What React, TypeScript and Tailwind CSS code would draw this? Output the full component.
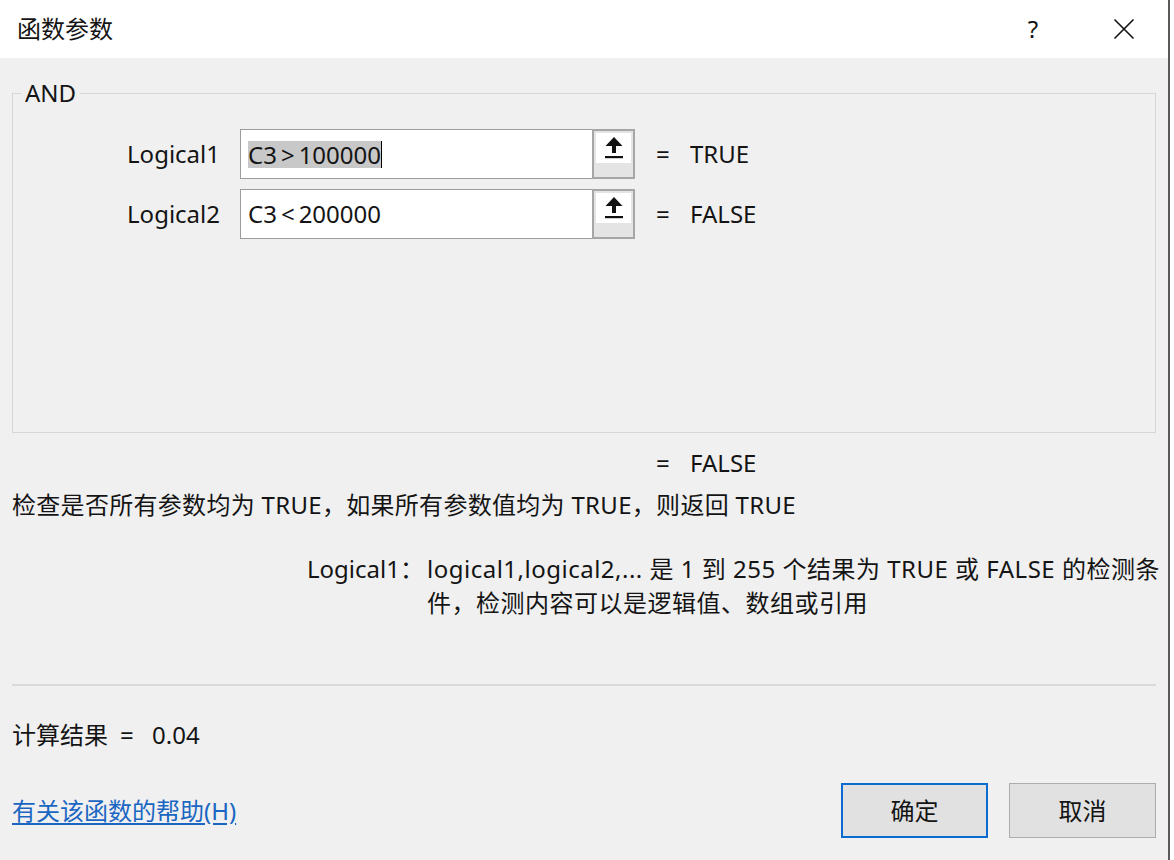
import React from 'react';

const font = { fontFamily: '"Noto Sans", "Noto Sans CJK SC", sans-serif' };

function UploadIcon() {
  return (
    <svg width="20" height="24" viewBox="0 0 20 24" fill="#111">
      <path d="M10 1 L18.5 10 L12 10 L12 17 L8 17 L8 10 L1.5 10 Z" />
      <rect x="1" y="20" width="18" height="2.2" />
    </svg>
  );
}

function CloseIcon() {
  return (
    <svg width="22" height="22" viewBox="0 0 22 22" stroke="#111" strokeWidth="1.6" fill="none">
      <path d="M1.5 1.5 L20.5 20.5 M20.5 1.5 L1.5 20.5" />
    </svg>
  );
}

// operator gets a little room either side, the way the dialog font draws it
function Formula({ left, op, right }: { left: string; op: string; right: string }) {
  return (
    <>
      {left}
      <span className="mx-[4px]">{op}</span>
      {right}
    </>
  );
}

function ArgRow({ label, left, op, right, result, selected }: { label: string; left: string; op: string; right: string; result: string; selected?: boolean }) {
  return (
    <div className="flex items-center h-[50px]">
      <div className="w-[207px] text-right">{label}</div>
      <div className="ml-[20px] w-[353px] h-[50px] bg-white border border-[#9c9c9c] flex items-center pl-[7px]">
        {selected ? (
          <>
            <span className="bg-[#c8c8c8] leading-[27px]"><Formula left={left} op={op} right={right} /></span>
            <span className="w-px h-[27px] bg-black" />
          </>
        ) : (
          <span><Formula left={left} op={op} right={right} /></span>
        )}
      </div>
      <div className="-ml-px w-[43px] h-[50px] border-2 border-[#a6a6a6] bg-[#e4e4e4] p-[2px] flex flex-col">
        <div className="h-[30px] bg-white flex items-center justify-center">
          <UploadIcon />
        </div>
      </div>
      <div className="ml-[21px] w-[34px]">=</div>
      <div>{result}</div>
    </div>
  );
}

export default function App() {
  return (
    <div className="w-[1174px] h-[860px] flex bg-white overflow-hidden text-[24px] text-[#141414]" style={font}>
      <div className="w-[1168px] flex flex-col">
        <div className="h-[58px] bg-white flex items-center pl-[17px]">
          <span className="flex-1">函数参数</span>
          <span className="w-[20px] text-center">?</span>
          <span className="ml-[70px] mr-[33px] flex items-center"><CloseIcon /></span>
        </div>

        <div className="flex-1 bg-[#f0f0f0] px-[12px] flex flex-col">
          <fieldset className="mt-[21px] h-[354px] border border-[#d6d6d6] w-[1144px]">
            <legend className="ml-[8px] px-[4px] leading-[28px]">AND</legend>
            <div className="pt-[22px] flex flex-col gap-[10px]">
              <ArgRow label="Logical1" left="C3" op=">" right="100000" result="TRUE" selected />
              <ArgRow label="Logical2" left="C3" op="<" right="200000" result="FALSE" />
            </div>
          </fieldset>

          <div className="mt-[16px] h-[28px] leading-[28px] flex pl-[644px]">
            <span className="w-[34px]">=</span>
            <span>FALSE</span>
          </div>

          <div className="mt-[14px] h-[28px] leading-[28px] tracking-[0.3px]">
            检查是否所有参数均为 TRUE，如果所有参数值均为 TRUE，则返回 TRUE
          </div>

          <div className="mt-[33px] flex pl-[295px] leading-[34px]">
            <div className="w-[120px] shrink-0">Logical1：</div>
            <div className="whitespace-nowrap tracking-[0.5px]">
              logical1,logical2,... 是 1 到 255 个结果为 TRUE 或 FALSE 的检测条
              <br />
              件，检测内容可以是逻辑值、数组或引用
            </div>
          </div>

          <div className="mt-[64px] h-[2px] bg-[#dadada]" />

          <div className="mt-[35px] h-[28px] leading-[28px] flex">
            <span>计算结果</span>
            <span className="ml-[12px] w-[32px]">=</span>
            <span>0.04</span>
          </div>

          <div className="mt-[34px] flex items-center">
            <a href="#" className="text-[#1a66c2] underline underline-offset-[3px] flex-1">有关该函数的帮助(H)</a>
            <button className="w-[147px] h-[55px] border-2 border-[#0a6bd0] bg-[#e1e1e1]">确定</button>
            <button className="ml-[21px] w-[147px] h-[55px] border border-[#adadad] bg-[#e1e1e1]">取消</button>
          </div>
        </div>
      </div>
      <div className="w-[2px] bg-[#5a5a5a]" />
      <div className="flex-1 bg-white" />
    </div>
  );
}
